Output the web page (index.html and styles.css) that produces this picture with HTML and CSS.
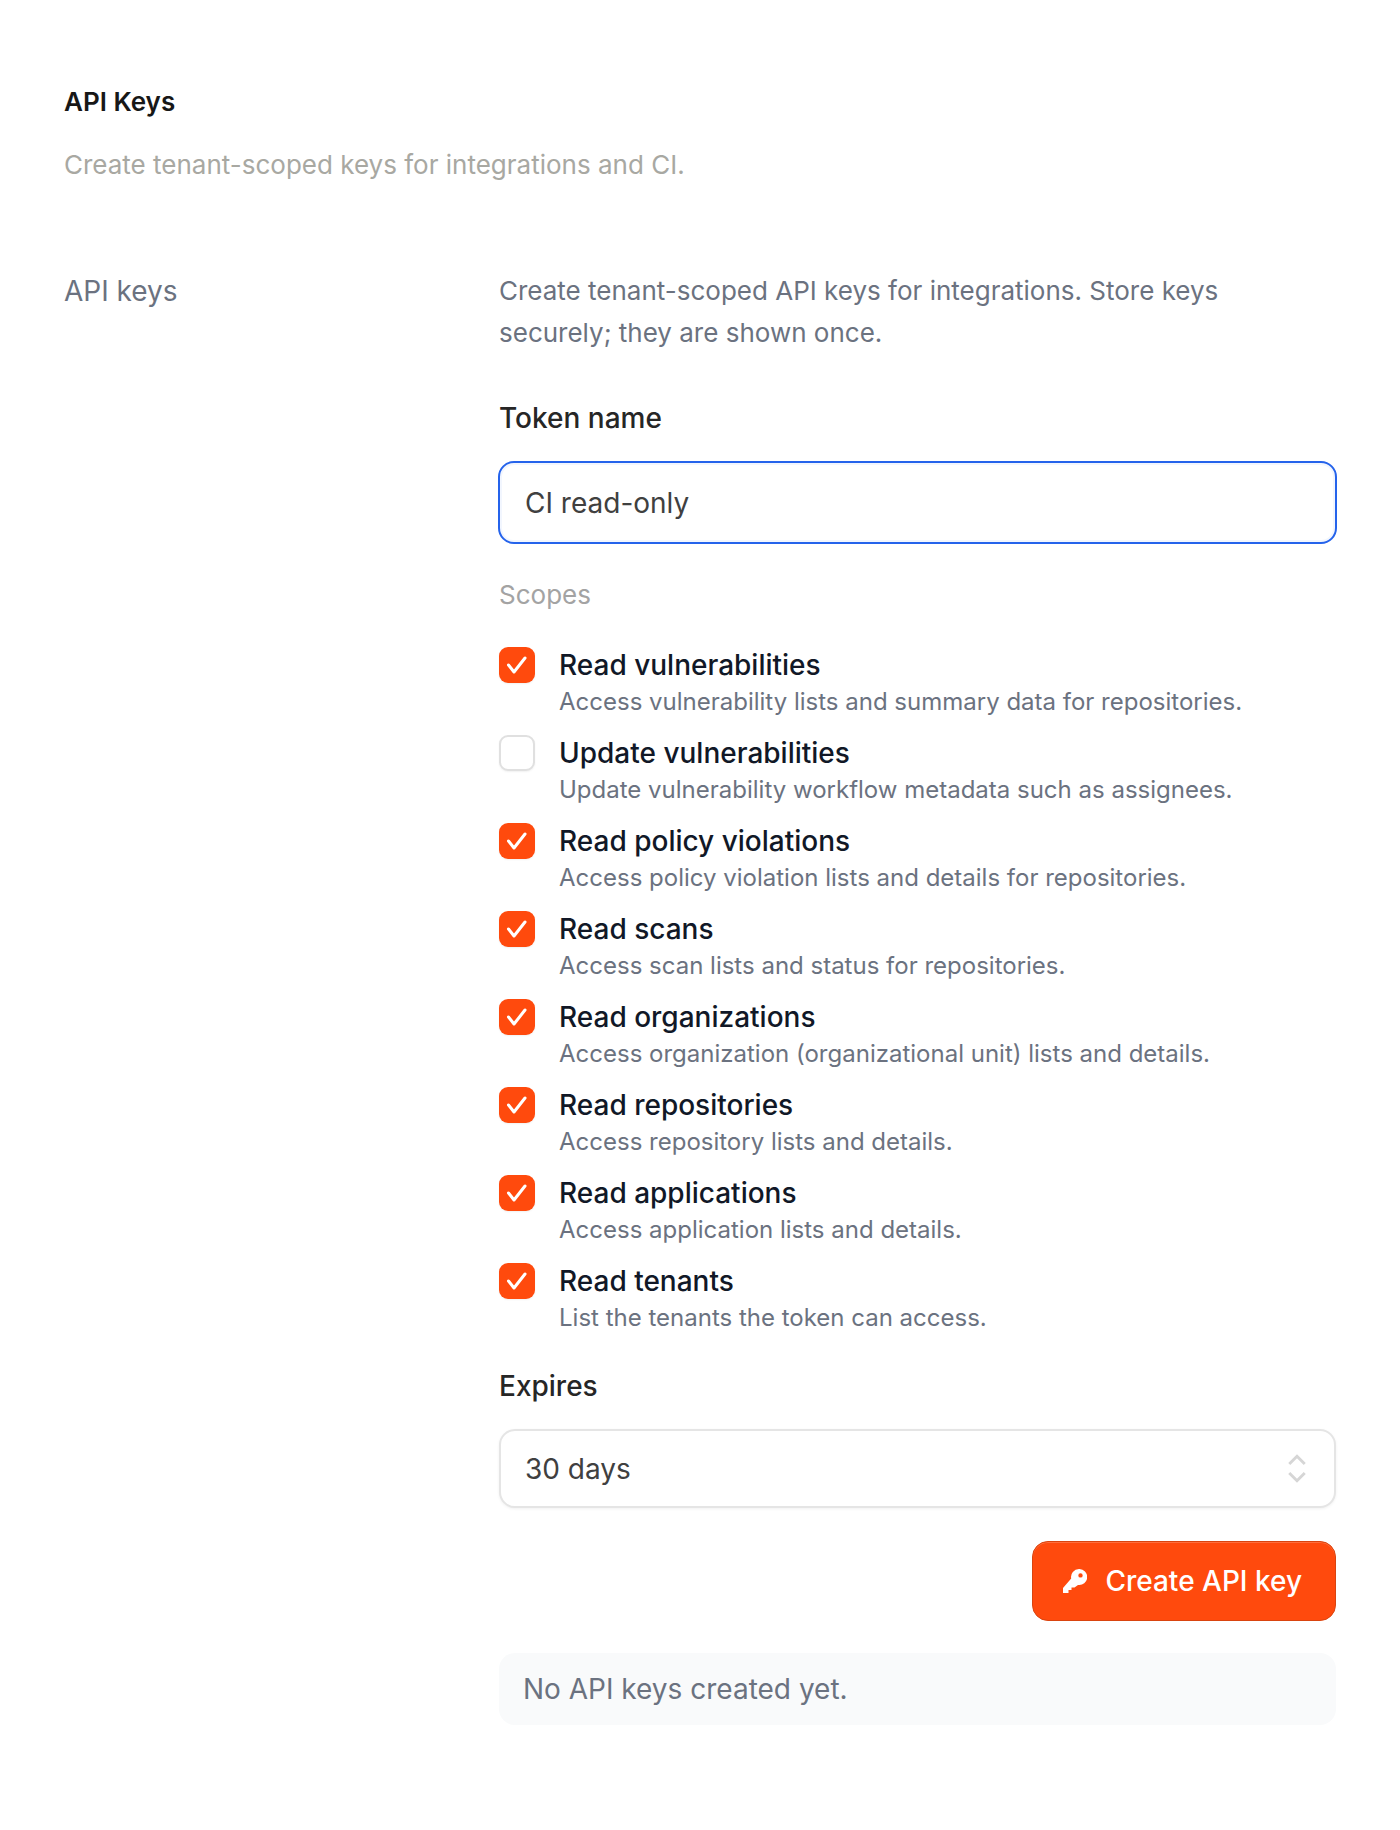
FILE: index.html
```html
<!DOCTYPE html>
<html lang="en">
<head>
    <meta charset="UTF-8">
    <meta name="viewport" content="width=device-width, initial-scale=1.0">
    <title>API Keys</title>
    <link rel="stylesheet" href="styles.css">
</head>
<body>
    <header class="page-head">
        <h1>API Keys</h1>
        <p>Create tenant-scoped keys for integrations and CI.</p>
    </header>

    <section class="settings-row">
        <h2>API keys</h2>
        <div class="settings-body">
            <p class="intro">Create tenant-scoped API keys for integrations. Store keys securely; they are shown once.</p>

            <label class="field-label" for="token-name">Token name</label>
            <input class="text-input" id="token-name" type="text" value="CI read-only">

            <div class="scopes-label">Scopes</div>
            <ul class="scopes">
                <li class="scope">
                    <span class="check on"><svg viewBox="0 0 36 36"><path d="M9.5 18l5.5 7L26 11"/></svg></span>
                    <div><div class="scope-name">Read vulnerabilities</div><div class="scope-desc">Access vulnerability lists and summary data for repositories.</div></div>
                </li>
                <li class="scope">
                    <span class="check"></span>
                    <div><div class="scope-name">Update vulnerabilities</div><div class="scope-desc">Update vulnerability workflow metadata such as assignees.</div></div>
                </li>
                <li class="scope">
                    <span class="check on"><svg viewBox="0 0 36 36"><path d="M9.5 18l5.5 7L26 11"/></svg></span>
                    <div><div class="scope-name">Read policy violations</div><div class="scope-desc">Access policy violation lists and details for repositories.</div></div>
                </li>
                <li class="scope">
                    <span class="check on"><svg viewBox="0 0 36 36"><path d="M9.5 18l5.5 7L26 11"/></svg></span>
                    <div><div class="scope-name">Read scans</div><div class="scope-desc">Access scan lists and status for repositories.</div></div>
                </li>
                <li class="scope">
                    <span class="check on"><svg viewBox="0 0 36 36"><path d="M9.5 18l5.5 7L26 11"/></svg></span>
                    <div><div class="scope-name">Read organizations</div><div class="scope-desc">Access organization (organizational unit) lists and details.</div></div>
                </li>
                <li class="scope">
                    <span class="check on"><svg viewBox="0 0 36 36"><path d="M9.5 18l5.5 7L26 11"/></svg></span>
                    <div><div class="scope-name">Read repositories</div><div class="scope-desc">Access repository lists and details.</div></div>
                </li>
                <li class="scope">
                    <span class="check on"><svg viewBox="0 0 36 36"><path d="M9.5 18l5.5 7L26 11"/></svg></span>
                    <div><div class="scope-name">Read applications</div><div class="scope-desc">Access application lists and details.</div></div>
                </li>
                <li class="scope">
                    <span class="check on"><svg viewBox="0 0 36 36"><path d="M9.5 18l5.5 7L26 11"/></svg></span>
                    <div><div class="scope-name">Read tenants</div><div class="scope-desc">List the tenants the token can access.</div></div>
                </li>
            </ul>

            <label class="field-label expires-label" for="expires">Expires</label>
            <div class="select-wrap">
                <select class="select-input" id="expires">
                    <option>30 days</option>
                </select>
                <svg class="select-arrows" viewBox="0 0 18 28"><path d="M2 10l7-7 7 7M2 18l7 7 7-7"/></svg>
            </div>

            <div class="actions">
                <button class="primary-btn" type="button">
                    <svg viewBox="0 0 24 24"><path fill-rule="evenodd" d="M16 0a8 8 0 1 1-1 15.9L11.5 18.5H8.5V21H5.5V24H0V19L8.2 9.6A8 8 0 0 1 16 0zM17.5 4.2a2.2 2.2 0 1 0 0 4.4 2.2 2.2 0 0 0 0-4.4z"/></svg>
                    Create API key
                </button>
            </div>

            <div class="empty-note">No API keys created yet.</div>
        </div>
    </section>
</body>
</html>
```
FILE: styles.css
```css
* {
    box-sizing: border-box;
}
body {
    margin: 0;
    padding: 80px 64px 106px;
    background: #fff;
    font-family: Inter, "Noto Sans", sans-serif;
    color: #111827;
}
h1 {
    margin: 0;
    font-size: 26px;
    line-height: 44px;
    font-weight: 600;
    color: #171717;
}
.page-head p {
    margin: 19px 0 0;
    font-size: 26px;
    line-height: 44px;
    color: #a8a8a2;
}
.settings-row {
    display: grid;
    grid-template-columns: 435px 1fr;
    margin-top: 83px;
}
h2 {
    margin: 0;
    font-size: 28px;
    line-height: 42px;
    font-weight: 400;
    color: #6b7280;
}
.settings-body {
    width: 837px;
}
.intro {
    margin: 0;
    font-size: 26px;
    line-height: 42px;
    color: #6b7280;
}
.field-label {
    display: block;
    margin-top: 43px;
    font-size: 28px;
    line-height: 42px;
    font-weight: 500;
    color: #262626;
}
.text-input {
    display: block;
    width: calc(100% + 2px);
    height: 83px;
    margin: 22px -1px 0;
    padding: 0 25px;
    border: 2px solid #2563eb;
    border-radius: 16px;
    outline: none;
    background: #fff;
    box-shadow: inset 0 0 0 2px rgba(37,99,235,0.06);
    font: 400 28px Inter, sans-serif;
    color: #404040;
}
.scopes-label {
    margin-top: 30px;
    font-size: 26px;
    line-height: 42px;
    color: #a3a3a3;
}
.scopes {
    list-style: none;
    margin: 30px 0 0;
    padding: 0;
}
.scope {
    display: flex;
    gap: 24px;
    height: 88px;
}
.check {
    flex: none;
    width: 36px;
    height: 36px;
    margin-top: 1px;
    border: 2px solid #e0e0e0;
    border-radius: 9px;
    box-shadow: 0 1px 2px rgba(0,0,0,0.06);
    background: #fff;
}
.check.on {
    border: 0;
    background: #ff4a0d;
}
.check svg {
    display: block;
    width: 36px;
    height: 36px;
    fill: none;
    stroke: #fff;
    stroke-width: 3;
    stroke-linecap: round;
    stroke-linejoin: round;
}
.scope-name {
    font-size: 28px;
    line-height: 38px;
    font-weight: 500;
    color: #111827;
}
.scope-desc {
    font-size: 24px;
    line-height: 36px;
    color: #6b7280;
}
.expires-label {
    margin-top: 15px;
}
.select-wrap {
    position: relative;
    margin-top: 22px;
}
.select-input {
    display: block;
    width: 100%;
    height: 79px;
    padding: 0 24px;
    border: 2px solid #e5e5e5;
    border-radius: 16px;
    box-shadow: 0 1px 3px rgba(0,0,0,0.06);
    background: #fff;
    appearance: none;
    font: 400 28px Inter, sans-serif;
    color: #404040;
}
.select-arrows {
    position: absolute;
    top: 24px;
    right: 29px;
    width: 20px;
    height: 31px;
    fill: none;
    stroke: #d6d6d6;
    stroke-width: 2.6;
}
.actions {
    display: flex;
    justify-content: flex-end;
    margin-top: 33px;
}
.primary-btn {
    display: flex;
    align-items: center;
    gap: 18px;
    height: 80px;
    padding: 0 33px 0 30px;
    border: 1px solid #d9440f;
    border-radius: 16px;
    background: #ff4a0d;
    box-shadow: inset 0 1px 0 rgba(255,255,255,0.2);
    font: 500 28px Inter, sans-serif;
    color: #fff;
}
.primary-btn svg {
    width: 24px;
    height: 24px;
    fill: #fff;
}
.empty-note {
    margin-top: 32px;
    height: 72px;
    padding: 0 24px;
    border-radius: 16px;
    background: #f9fafb;
    font-size: 28px;
    line-height: 72px;
    color: #6b7280;
}
```
